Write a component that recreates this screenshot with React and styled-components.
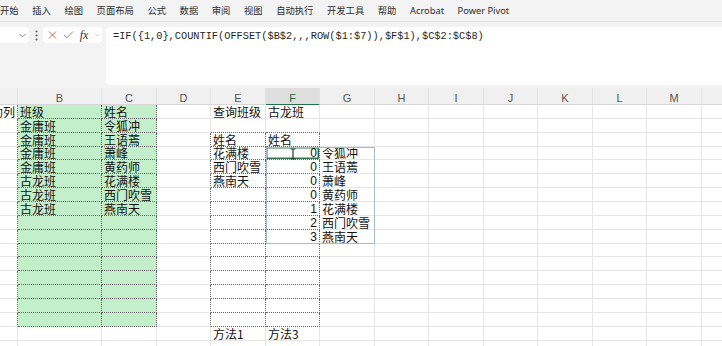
import React from "react";
import styled, { createGlobalStyle } from "styled-components";
import { ChevronDown, X, Check } from "lucide-react";

const GlobalStyle = createGlobalStyle`
  html, body {
    margin: 0;
    padding: 0;
    background: #ffffff;
    overflow: hidden;
  }
  #root {
    width: 722px;
    height: 346px;
    overflow: hidden;
  }
`;

const COLS = ["A", "B", "C", "D", "E", "F", "G", "H", "I", "J", "K", "L", "M", "N"];
const WIDTHS = [18, 84, 55, 54, 55, 54, 55, 54, 55, 54, 55, 54, 55, 55];
const ROW_H = 13.86;
const ROW_COUNT = 18;

const TABS = ["开始", "插入", "绘图", "页面布局", "公式", "数据", "审阅", "视图", "自动执行", "开发工具", "帮助", "Acrobat", "Power Pivot"];

const FORMULA = "=IF({1,0},COUNTIF(OFFSET($B$2,,,ROW($1:$7)),$F$1),$C$2:$C$8)";

const data = {
  A1: "辅助列",
  B1: "班级", C1: "姓名", E1: "查询班级", F1: "古龙班",
  B2: "金庸班", C2: "令狐冲",
  B3: "金庸班", C3: "王语蔫", E3: "姓名", F3: "姓名",
  B4: "金庸班", C4: "萧峰", E4: "花满楼", F4: 0, G4: "令狐冲",
  B5: "金庸班", C5: "黄药师", E5: "西门吹雪", F5: 0, G5: "王语蔫",
  B6: "古龙班", C6: "花满楼", E6: "燕南天", F6: 0, G6: "萧峰",
  B7: "古龙班", C7: "西门吹雪", F7: 0, G7: "黄药师",
  B8: "古龙班", C8: "燕南天", F8: 1, G8: "花满楼",
  F9: 2, G9: "西门吹雪",
  F10: 3, G10: "燕南天",
  E17: "方法1", F17: "方法3",
};

const isGreen = (c, r) => (c === 1 || c === 2) && r >= 1 && r <= 16;
const isTable = (c, r) => (c === 4 || c === 5) && r >= 3 && r <= 16;
const isBoxed = (c, r) => isGreen(c, r) || isTable(c, r);

const gridTemplate = WIDTHS.map((w) => `${w}px`).join(" ");

const Ribbon = styled.div`
  height: 21px;
  display: flex;
  align-items: center;
  gap: 13.6px;
  background: #f3f3f3;
  border-bottom: 1px solid #e0e0e0;
  font-family: "Noto Sans", "Noto Sans CJK SC", sans-serif;
  font-size: 9.3px;
  color: #2b2b2b;
  white-space: nowrap;
`;

const Tab = styled.span`
  line-height: 12px;
  padding-top: 1px;
`;

const FormulaArea = styled.div`
  height: 66px;
  background: #f3f3f3;
  display: flex;
  align-items: flex-start;
  padding-top: 5px;
  box-sizing: border-box;
`;

const NameBox = styled.div`
  width: 29px;
  height: 16px;
  background: #ffffff;
  border-radius: 0 4px 4px 0;
  display: flex;
  align-items: center;
  justify-content: flex-end;
  padding-right: 1px;
  box-sizing: border-box;
  color: #555;
`;

const Dots = styled.div`
  width: 14px;
  height: 16px;
  display: flex;
  align-items: center;
  justify-content: center;
`;

const ButtonBox = styled.div`
  width: 59px;
  height: 16px;
  background: #ffffff;
  border-radius: 4px;
  display: flex;
  align-items: center;
  padding-left: 3px;
  box-sizing: border-box;
  gap: 3px;
`;

const IconSlot = styled.span`
  width: ${(p) => p.$w || 13}px;
  display: flex;
  align-items: center;
  justify-content: center;
  color: ${(p) => p.$color || "#333"};
`;

const Fx = styled.span`
  font-family: "Liberation Serif", serif;
  font-style: italic;
  font-size: 12px;
  color: #333;
  line-height: 12px;
  width: 16px;
  text-align: center;
`;

const FormulaInput = styled.div`
  flex: 1;
  margin-left: 4px;
  height: 58px;
  background: #ffffff;
  border-radius: 4px 0 0 4px;
  padding: 3px 7px;
  box-sizing: border-box;
  font-family: "Liberation Mono", monospace;
  font-size: 10.3px;
  line-height: 12px;
  color: #1f1f1f;
  white-space: nowrap;
`;

const Frame = styled.div`
  width: 722px;
  overflow: hidden;
`;

const HeaderRow = styled.div`
  display: grid;
  grid-template-columns: ${gridTemplate};
  height: 17px;
  background: #f0f0f0;
  border-bottom: 1px solid #d6d6d6;
  box-sizing: border-box;
`;

const HeaderCell = styled.div`
  display: flex;
  align-items: center;
  justify-content: center;
  font-family: "Liberation Sans", Arial, sans-serif;
  font-size: 11px;
  color: ${(p) => (p.$active ? "#1e6c41" : "#555")};
  background: ${(p) => (p.$active ? "#dedede" : "transparent")};
  border-bottom: 2px solid ${(p) => (p.$active ? "#1e7145" : "transparent")};
  border-right: 1px solid #e2e2e2;
  box-sizing: border-box;
  padding-top: 4px;
`;

const Sheet = styled.div`
  position: relative;
`;

const Grid = styled.div`
  display: grid;
  grid-template-columns: ${gridTemplate};
  grid-auto-rows: ${ROW_H}px;
`;

const Cell = styled.div`
  position: relative;
  box-sizing: border-box;
  display: flex;
  align-items: flex-end;
  justify-content: ${(p) => (p.$num || p.$clipLeft ? "flex-end" : "flex-start")};
  padding: 0 2px;
  overflow: ${(p) => (p.$clipLeft ? "hidden" : "visible")};
  white-space: nowrap;
  background: ${(p) => (p.$fill ? "#c4efcb" : "#ffffff")};
  border-right: 1px ${(p) => (p.$rDark ? "dotted #666" : "solid #e6e6e6")};
  border-bottom: 1px ${(p) => (p.$bDark ? "dotted #666" : "solid #e6e6e6")};
  box-shadow: ${(p) => (p.$selected ? "inset 0 0 0 1.5px #2f7a4a" : "none")};
  font-family: ${(p) =>
    p.$num ? '"Liberation Sans", Arial, sans-serif' : '"Noto Sans CJK SC", "Noto Sans", sans-serif'};
  font-size: 12px;
  line-height: 12px;
  color: #111;
`;

const SpillBox = styled.div`
  position: absolute;
  left: 266px;
  top: ${3 * ROW_H}px;
  width: 109px;
  height: ${7 * ROW_H}px;
  border: 1px solid #a9b9cc;
  box-sizing: border-box;
  pointer-events: none;
`;

const Cursor = styled.svg`
  position: absolute;
  left: 23px;
  top: 1px;
`;

function IBeam() {
  return (
    <Cursor width="8" height="12" viewBox="0 0 8 12">
      <path d="M1.5 1h5M1.5 11h5M4 1v10" stroke="#333" strokeWidth="1.2" fill="none" />
    </Cursor>
  );
}

function VDots() {
  return (
    <svg width="3" height="11" viewBox="0 0 3 11">
      <circle cx="1.5" cy="1.5" r="1.1" fill="#666" />
      <circle cx="1.5" cy="5.5" r="1.1" fill="#666" />
      <circle cx="1.5" cy="9.5" r="1.1" fill="#666" />
    </svg>
  );
}

function SheetCell({ c, r }) {
  const key = `${COLS[c]}${r}`;
  const value = data[key];
  const boxed = isBoxed(c, r);
  const rDark = boxed || isBoxed(c + 1, r);
  const bDark = boxed || isBoxed(c, r + 1);
  const selected = key === "F4";
  return (
    <Cell
      $fill={isGreen(c, r)}
      $rDark={rDark}
      $bDark={bDark}
      $num={typeof value === "number"}
      $clipLeft={key === "A1"}
      $selected={selected}
    >
      {value !== undefined ? value : null}
      {selected && <IBeam />}
    </Cell>
  );
}

export default function App() {
  const rows = Array.from({ length: ROW_COUNT }, (_, i) => i + 1);
  const visibleLabel = (c) => (c === "A" || c === "N" ? "" : c);
  return (
    <>
      <GlobalStyle />
      <Ribbon>
        {TABS.map((t) => (
          <Tab key={t}>{t}</Tab>
        ))}
      </Ribbon>
      <FormulaArea>
        <NameBox>
          <ChevronDown size={11} strokeWidth={1.6} />
        </NameBox>
        <Dots>
          <VDots />
        </Dots>
        <ButtonBox>
          <IconSlot $color="#d1453b">
            <X size={14} strokeWidth={1.6} />
          </IconSlot>
          <IconSlot $color="#3f9a52">
            <Check size={14} strokeWidth={1.6} />
          </IconSlot>
          <Fx>fx</Fx>
          <IconSlot $w={9} $color="#aaa">
            <ChevronDown size={10} strokeWidth={1.4} />
          </IconSlot>
        </ButtonBox>
        <FormulaInput>{FORMULA}</FormulaInput>
      </FormulaArea>
      <Frame>
        <HeaderRow>
          {COLS.map((c) => (
            <HeaderCell key={c} $active={c === "F"}>
              {visibleLabel(c)}
            </HeaderCell>
          ))}
        </HeaderRow>
        <Sheet>
          <Grid>
            {rows.map((r) =>
              COLS.map((_, c) => <SheetCell key={`${c}-${r}`} c={c} r={r} />)
            )}
          </Grid>
          <SpillBox />
        </Sheet>
      </Frame>
    </>
  );
}
